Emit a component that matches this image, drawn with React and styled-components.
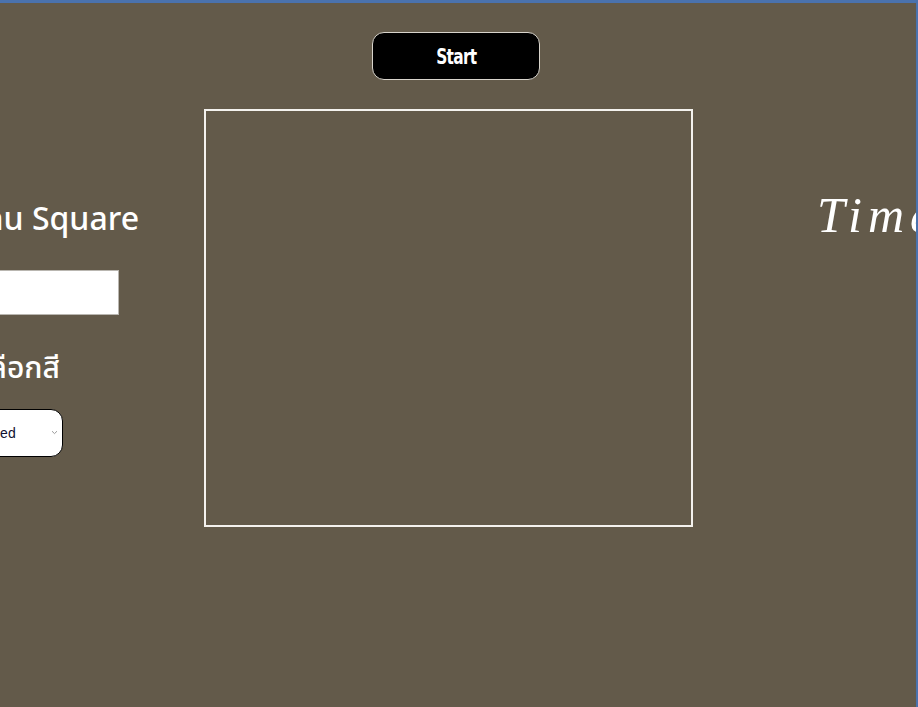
import React from 'react';
import styled, { createGlobalStyle } from 'styled-components';

const Global = createGlobalStyle`
  html, body {
    margin: 0;
    padding: 0;
    background: #635a4a;
    overflow: hidden;
  }
`;

const Frame = styled.div`
  box-sizing: border-box;
  width: 918px;
  height: 707px;
  border-top: 3px solid #4a72ae;
  border-right: 2px solid #4a72ae;
  background: #635a4a;
  overflow: hidden;
  font-family: 'Noto Sans', 'Noto Sans Thai', sans-serif;
  color: #fff;
`;

const TopBar = styled.div`
  display: flex;
  justify-content: center;
  padding-top: 29px;
  height: 106px;
  box-sizing: border-box;
  margin-left: -4px;
`;

const StartButton = styled.button`
  width: 168px;
  height: 48px;
  background: #000;
  color: #fff;
  border: 1px solid #d8d4cc;
  border-radius: 12px;
  font-family: 'DejaVu Sans Condensed', 'DejaVu Sans', sans-serif;
  font-stretch: condensed;
  font-weight: 700;
  font-size: 19px;
  letter-spacing: -0.8px;
  cursor: pointer;
`;

const ButtonLabel = styled.span`
  display: inline-block;
  transform: scale(0.9, 1.12);
`;

const Main = styled.div`
  display: grid;
  grid-template-columns: 204px 489px 1fr;
  align-items: start;
`;

const LeftCol = styled.div`
  width: 240px;
  margin-left: -100px;
  display: flex;
  flex-direction: column;
  align-items: center;
  padding-top: 86px;
`;

const Heading = styled.h2`
  margin: 0;
  font-size: 32px;
  font-weight: 500;
  line-height: 46px;
  white-space: nowrap;
  align-self: flex-end;
  margin-right: 1px;
`;

const NameInput = styled.input`
  box-sizing: border-box;
  width: 198px;
  height: 45px;
  margin-top: 29px;
  border: 1px solid #b9b6b0;
  background: #fff;
`;

const Label = styled.div`
  margin-top: 32px;
  font-size: 30px;
  font-weight: 500;
  line-height: 40px;
  align-self: flex-end;
  margin-right: 80px;
`;

const SelectWrap = styled.div`
  position: relative;
  margin-top: 22px;
`;

const ColorSelect = styled.select`
  box-sizing: border-box;
  width: 86px;
  height: 48px;
  border: 1px solid #000;
  border-radius: 12px;
  background: #fff;
  color: #101030;
  font-family: 'Liberation Sans', Arial, sans-serif;
  font-size: 14px;
  padding-left: 12px;
  appearance: none;
  -webkit-appearance: none;
  outline: none;
`;

const Chevron = styled.svg`
  position: absolute;
  right: 5px;
  top: 21px;
  pointer-events: none;
`;

const Board = styled.div`
  box-sizing: border-box;
  width: 489px;
  height: 418px;
  border: 2px solid #f4f2ee;
`;

const RightCol = styled.div`
  padding: 78px 0 0 124px;
`;

const TimeText = styled.div`
  font-family: 'Liberation Serif', 'DejaVu Serif', serif;
  font-style: italic;
  font-size: 50px;
  letter-spacing: 6px;
  line-height: 56px;
  white-space: nowrap;
`;

export default function App() {
  return (
    <>
      <Global />
      <Frame>
        <TopBar>
          <StartButton>
            <ButtonLabel>Start</ButtonLabel>
          </StartButton>
        </TopBar>
        <Main>
          <LeftCol>
            <Heading>Menu Square</Heading>
            <NameInput type="text" />
            <Label>เลือกสี</Label>
            <SelectWrap>
              <ColorSelect defaultValue="red">
                <option value="red">Red</option>
                <option value="green">Green</option>
                <option value="blue">Blue</option>
              </ColorSelect>
              <Chevron width="7" height="5" viewBox="0 0 7 5">
                <path d="M1 1.2 L3.5 3.6 L6 1.2" fill="none" stroke="#9a9a9a" strokeWidth="1" />
              </Chevron>
            </SelectWrap>
          </LeftCol>
          <Board />
          <RightCol>
            <TimeText>Time</TimeText>
          </RightCol>
        </Main>
      </Frame>
    </>
  );
}
